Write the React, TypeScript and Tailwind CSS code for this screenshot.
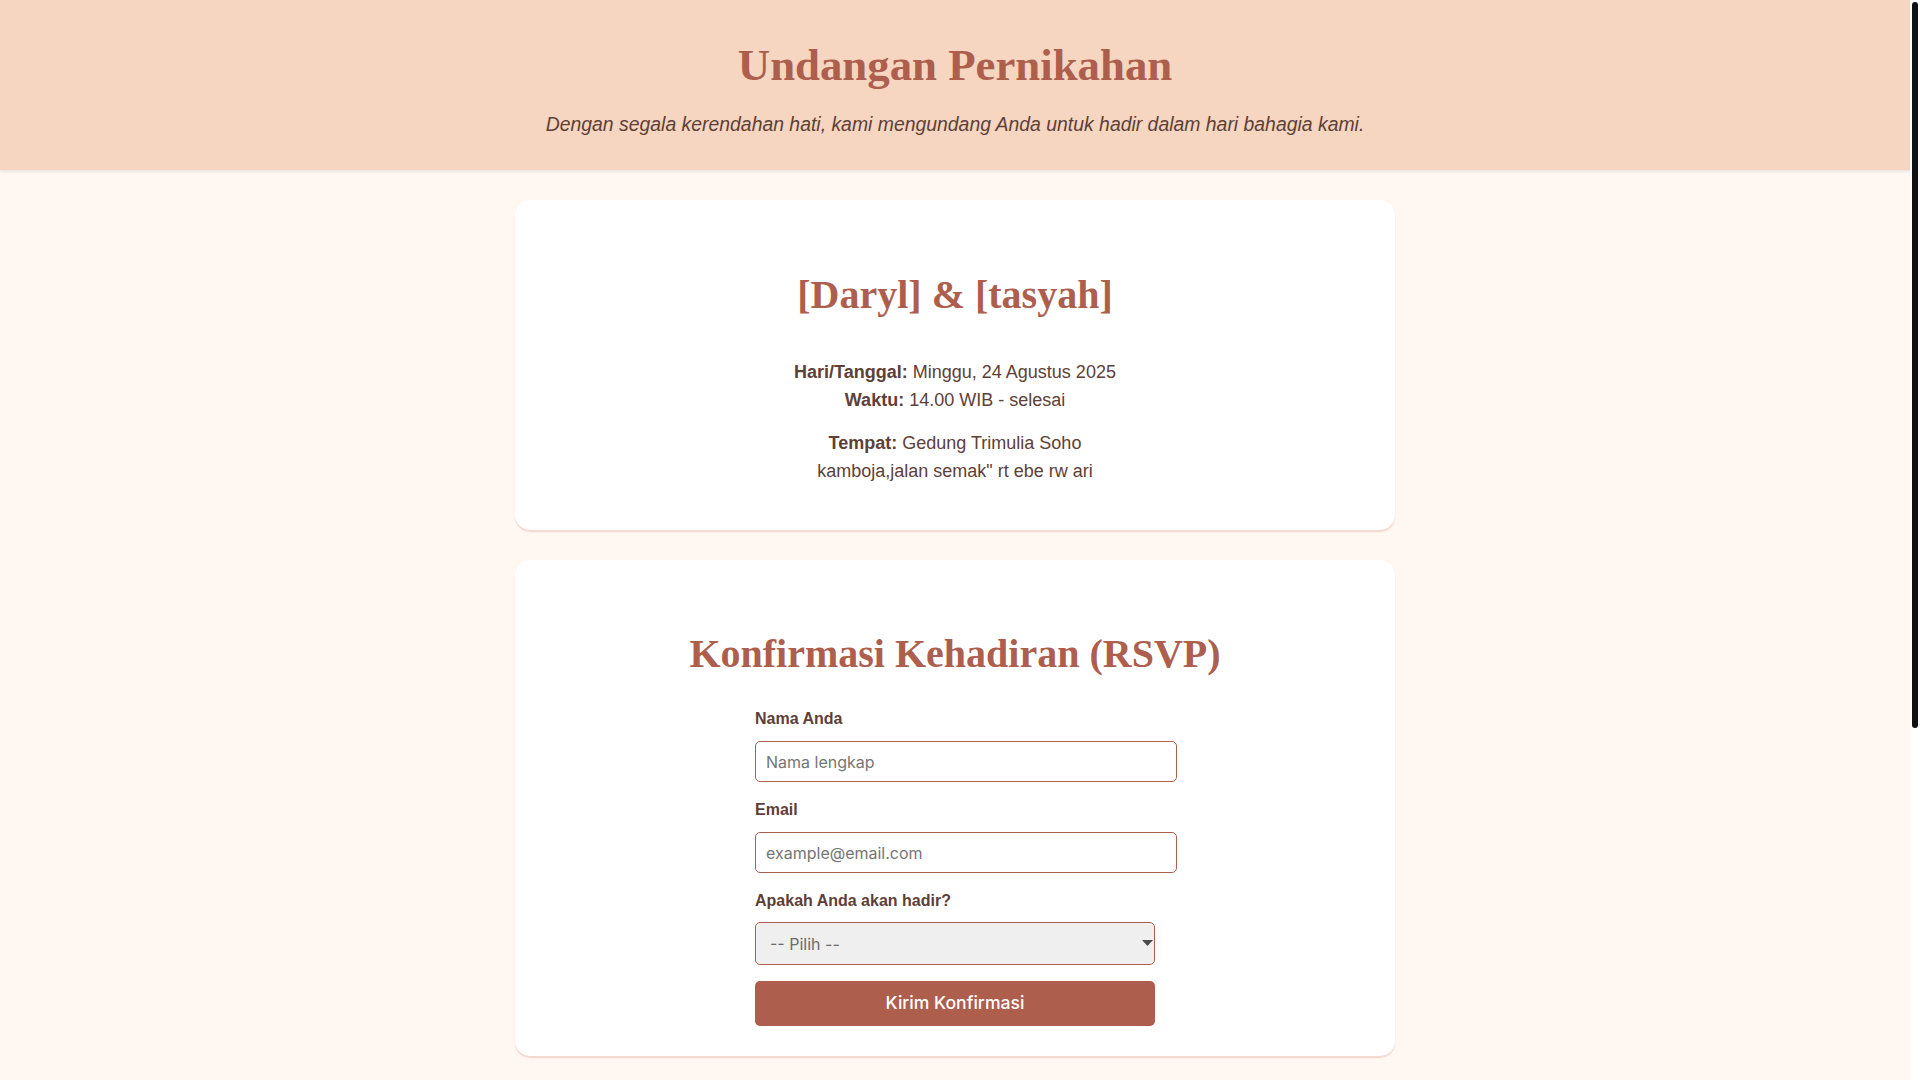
import React from "react";

export default function App() {
  return (
    <div
      className="min-h-[1600px] bg-white text-[#5d4037]"
      style={{ fontFamily: '"Liberation Sans", Arial, sans-serif' }}
    >
      <div className="mr-[10px] min-h-[1600px] bg-[#fff7f1]">
        <header className="h-[170px] bg-[#f6d5c1] text-center pt-[39px] shadow-[0_2px_2px_rgba(0,0,0,0.07)]">
          <h1
            className="text-[44.8px] leading-[52px] font-bold text-[#ad5e4d]"
            style={{ fontFamily: '"Liberation Serif", "Times New Roman", serif' }}
          >
            Undangan Pernikahan
          </h1>
          <p className="mt-[18px] text-[19.4px] leading-[30px] italic text-[#5d4037]">
            Dengan segala kerendahan hati, kami mengundang Anda untuk hadir dalam hari bahagia kami.
          </p>
        </header>

        <main className="flex flex-col items-center gap-[30px] pt-[30px] pb-[30px]">
          <section className="w-[880px] bg-white rounded-[15px] shadow-[0_2px_1px_rgba(220,160,140,0.35)] px-[40px] pt-[72px] pb-[45px] text-center">
            <h2
              className="text-[40px] leading-[46px] font-bold text-[#ad5e4d]"
              style={{ fontFamily: '"Liberation Serif", "Times New Roman", serif' }}
            >
              [Daryl] &amp; [tasyah]
            </h2>
            <div className="mt-[40px] text-[18px] leading-[28px]">
              <p>
                <strong className="font-bold">Hari/Tanggal:</strong> Minggu, 24 Agustus 2025
                <br />
                <strong className="font-bold">Waktu:</strong> 14.00 WIB - selesai
              </p>
              <p className="mt-[15px]">
                <strong className="font-bold">Tempat:</strong> Gedung Trimulia Soho
                <br />
                kamboja,jalan semak" rt ebe rw ari
              </p>
            </div>
          </section>

          <section className="w-[880px] bg-white rounded-[15px] shadow-[0_2px_1px_rgba(220,160,140,0.35)] px-[40px] pt-[71px] pb-[30px]">
            <h2
              className="text-center text-[40px] leading-[46px] font-bold text-[#ad5e4d]"
              style={{ fontFamily: '"Liberation Serif", "Times New Roman", serif' }}
            >
              Konfirmasi Kehadiran (RSVP)
            </h2>
            <form className="w-[400px] mx-auto mt-[29px]" onSubmit={(e) => e.preventDefault()}>
              <div className="mb-[15px]">
                <label className="block mb-[9px] text-[16px] leading-[26px] font-bold text-[#5d4037]">
                  Nama Anda
                </label>
                <input
                  type="text"
                  placeholder="Nama lengkap"
                  className="block w-[422px] h-[41px] px-[10px] border border-[#ad5e4d] rounded-[5px] bg-white text-[16px] text-[#333] placeholder:text-[#757575] outline-none"
                  style={{ fontFamily: 'Inter, "Noto Sans", sans-serif' }}
                />
              </div>
              <div className="mb-[15px]">
                <label className="block mb-[9px] text-[16px] leading-[26px] font-bold text-[#5d4037]">
                  Email
                </label>
                <input
                  type="email"
                  placeholder="example@email.com"
                  className="block w-[422px] h-[41px] px-[10px] border border-[#ad5e4d] rounded-[5px] bg-white text-[16px] text-[#333] placeholder:text-[#757575] outline-none"
                  style={{ fontFamily: 'Inter, "Noto Sans", sans-serif' }}
                />
              </div>
              <div>
                <label className="block mb-[8px] text-[16px] leading-[26px] font-bold text-[#5d4037]">
                  Apakah Anda akan hadir?
                </label>
                <div className="relative">
                  <select
                    defaultValue=""
                    className="block w-full h-[43px] pl-[14px] pr-[30px] appearance-none border border-[#ad5e4d] rounded-[5px] bg-[#efefef] text-[16px] text-[#6b6b6b] outline-none"
                    style={{ fontFamily: 'Inter, "Noto Sans", sans-serif' }}
                  >
                    <option value="">-- Pilih --</option>
                    <option value="hadir">Hadir</option>
                    <option value="tidak">Tidak Hadir</option>
                  </select>
                  <svg
                    className="absolute right-[2px] top-[18px] pointer-events-none"
                    width="11"
                    height="6"
                    viewBox="0 0 11 6"
                  >
                    <path d="M0 0 L11 0 L5.5 6 Z" fill="#4a4a4a" />
                  </svg>
                </div>
              </div>
              <button
                type="submit"
                className="block w-full h-[45px] mt-[16px] rounded-[5px] bg-[#ad5e4d] text-white text-[17.6px] font-medium"
                style={{ fontFamily: 'Inter, "Noto Sans", sans-serif' }}
              >
                Kirim Konfirmasi
              </button>
            </form>
          </section>
        </main>
      </div>

      <div className="fixed top-0 right-0 w-[10px] h-screen bg-white">
        <div className="mt-[2px] mx-[2px] h-[726px] rounded-full bg-[#111111]" />
      </div>
    </div>
  );
}
